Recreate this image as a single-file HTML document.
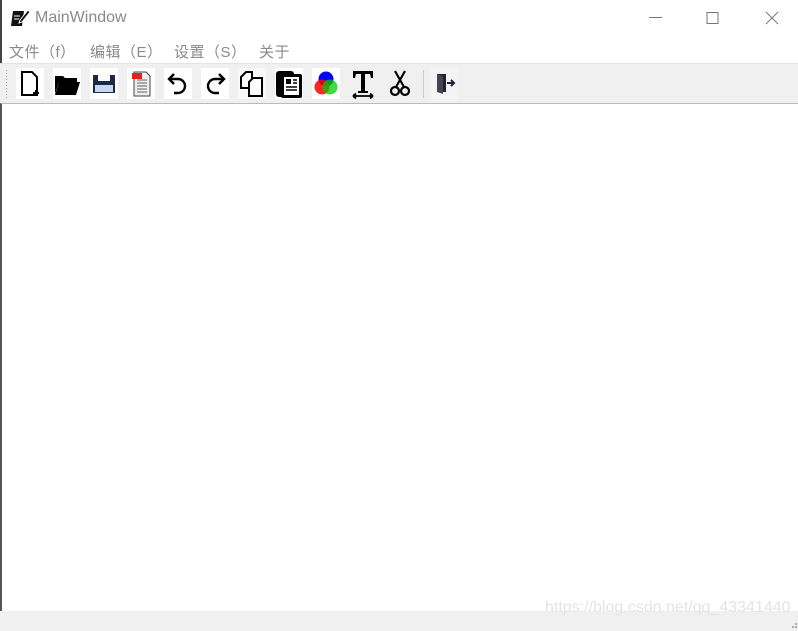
<!DOCTYPE html>
<html><head><meta charset="utf-8"><style>
body{margin:0;width:798px;height:631px;overflow:hidden;background:#fff;font-family:"Liberation Sans","Noto Sans CJK SC",sans-serif;position:relative}
.abs{position:absolute}
.title{left:35px;top:9px;font-size:16px;color:#8a8a8a}
.menu{top:41px;font-size:15px;color:#8a8a8a;letter-spacing:0.5px}
.tb{left:0;top:63px;width:798px;height:40px;background:#f0f0f0;border-top:1px solid #e3e3e3}
.btn{position:absolute;top:4px;width:28px;height:31px;background:#fff}
.main{left:0;top:103px;width:796px;height:507px;border-left:2px solid #555;border-top:1px solid #bbb;border-bottom:1px solid #777;background:#fff}
.status{left:0;top:611px;width:798px;height:20px;background:#f0f0f0}
</style></head><body>
<div class="abs" style="left:0;top:0;width:2px;height:631px;background:#444"></div>
<svg class="abs" style="left:10px;top:8px" width="20" height="20" viewBox="0 0 20 20"><path d="M3 3h11l-2 15H1z" fill="#111"/><path d="M10 12l8-10 2 2-8 10-3 1z" fill="#111" stroke="#fff" stroke-width="1"/><path d="M4 8h6M4 11h5" stroke="#fff" stroke-width="1"/></svg>
<div class="abs title">MainWindow</div>
<svg class="abs" style="left:640px;top:10px" width="150" height="16"><path d="M9 7.5h13" stroke="#777"/><rect x="67" y="2.5" width="11" height="11" fill="none" stroke="#777"/><path d="M126 2l12 12M138 2l-12 12" stroke="#777"/></svg>
<div class="abs menu" style="left:9px">文件（f）</div>
<div class="abs menu" style="left:90px">编辑（E）</div>
<div class="abs menu" style="left:174px">设置（S）</div>
<div class="abs menu" style="left:259px">关于</div>
<div class="abs tb">
<svg class="abs" style="left:5px;top:6px" width="3" height="28"><path d="M1.5 0v28" stroke="#aaa" stroke-dasharray="1 2"/></svg>
<div class="btn" style="left:16px"><svg width="28" height="31"><path d="M6 4h10l5 5v18H6z" fill="none" stroke="#000" stroke-width="2"/><path d="M20 22v6M17 25h6" stroke="#000" stroke-width="2"/></svg></div>
<div class="btn" style="left:53px"><svg width="28" height="31"><path d="M2 8h8l2 2h12v4H6l-4 12z" fill="#000"/><path d="M6 14h21l-4 13H2z" fill="#000"/></svg></div>
<div class="btn" style="left:90px"><svg width="28" height="31"><rect x="3" y="7" width="22" height="18" fill="#1a2a4a"/><rect x="8" y="7" width="12" height="6" fill="#fff"/><rect x="5" y="17" width="18" height="7" fill="#c8d8f0"/></svg></div>
<div class="btn" style="left:127px"><svg width="28" height="31"><path d="M7 4h12l4 4v20H7z" fill="#eee" stroke="#444"/><path d="M10 12h10M10 15h10M10 18h10M10 21h10M10 24h10" stroke="#666"/><rect x="5" y="5" width="10" height="6" fill="#d22"/></svg></div>
<div class="btn" style="left:164px"><svg width="28" height="31"><path d="M10 6L5 11l5 5" fill="none" stroke="#000" stroke-width="2.4"/><path d="M5 11h9a7 7 0 0 1 0 14h-4" fill="none" stroke="#000" stroke-width="2.4"/></svg></div>
<div class="btn" style="left:201px"><svg width="28" height="31"><path d="M18 6l5 5-5 5" fill="none" stroke="#000" stroke-width="2.4"/><path d="M23 11h-9a7 7 0 0 0 0 14h4" fill="none" stroke="#000" stroke-width="2.4"/></svg></div>
<div class="btn" style="left:238px;background:#f8f8f8"><svg width="28" height="31"><path d="M3 9l5-5h6v16H3z" fill="#fff" stroke="#000" stroke-width="2"/><path d="M11 14l4-4h9v18H11z" fill="#fff" stroke="#000" stroke-width="2"/></svg></div>
<div class="btn" style="left:275px"><svg width="28" height="31"><rect x="1" y="3" width="18" height="26" rx="3" fill="#000"/><rect x="6" y="6" width="21" height="24" rx="2" fill="#000"/><rect x="9" y="9" width="15" height="18" fill="#fff"/><rect x="11" y="11" width="5" height="5" fill="#000"/><path d="M18 12h4M18 15h4M11 19h11M11 22h11" stroke="#000" stroke-width="1.6"/></svg></div>
<div class="btn" style="left:312px"><svg width="28" height="31"><circle cx="14" cy="11" r="7.5" fill="#00f"/><circle cx="10" cy="19" r="7.5" fill="#f00" opacity=".85"/><circle cx="18" cy="19" r="7.5" fill="#0c0" opacity=".75"/></svg></div>
<div class="btn" style="left:349px;background:#f0f0f0"><svg width="28" height="31"><path d="M4 3h20v7h-2l-1-4h-5v17h3v2H9v-2h3V6H7L6 10H4z" fill="#000"/><path d="M4 28h20M4 28l3-2.5M4 28l3 2.5M24 28l-3-2.5M24 28l-3 2.5" stroke="#000" stroke-width="1.8"/></svg></div>
<div class="btn" style="left:386px;background:#f0f0f0"><svg width="28" height="31"><path d="M9 3l9 16M19 3l-9 16" stroke="#000" stroke-width="2.2"/><circle cx="9" cy="23" r="4" fill="none" stroke="#000" stroke-width="2.2"/><circle cx="19" cy="23" r="4" fill="none" stroke="#000" stroke-width="2.2"/></svg></div>
<div class="abs" style="left:423px;top:6px;width:1px;height:28px;background:#ccc"></div>
<div class="btn" style="left:431px;background:#f4f4f4"><svg width="28" height="31"><path d="M6 6h9v18H6z" fill="#223"/><path d="M6 6l6 2v18l-6-2z" fill="#445"/><path d="M16 15h7M20 12l3 3-3 3" fill="none" stroke="#223" stroke-width="2"/></svg></div>
</div>
<div class="abs main"></div>
<div class="abs status"></div>
<div class="abs" style="left:545px;top:599px;font-size:16px;color:#e4e4e4">https://blog.csdn.net/qq_43341440</div>
<svg class="abs" style="left:790px;top:622px" width="8" height="9"><rect x="5" y="1" width="2" height="2" fill="#aaa"/><rect x="2" y="4" width="2" height="2" fill="#aaa"/><rect x="5" y="4" width="2" height="2" fill="#aaa"/></svg>
</body></html>
